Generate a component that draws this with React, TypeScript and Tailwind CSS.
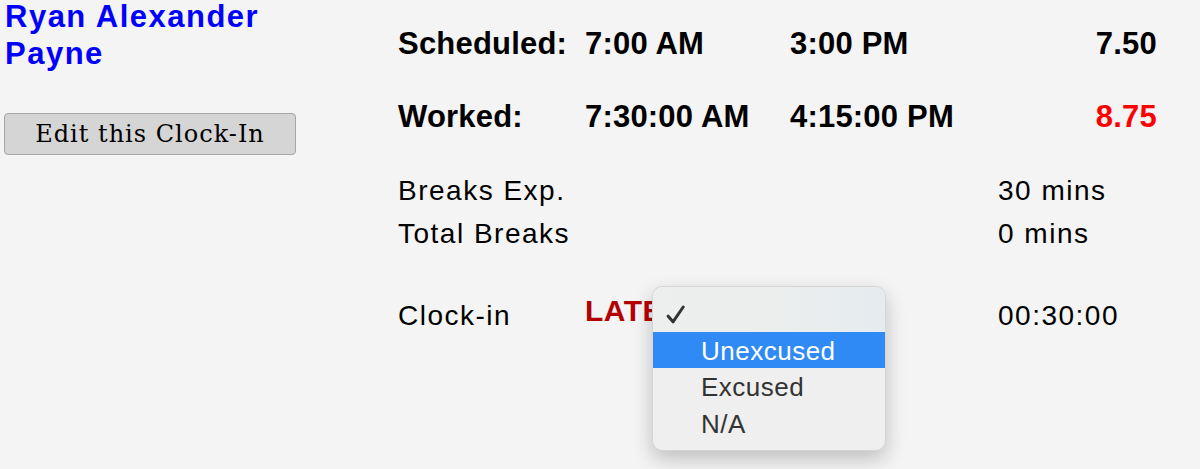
import React from "react";

const Check = () => (
  <svg width="19" height="19" viewBox="0 0 19 19" fill="none">
    <path
      d="M2.2 11.2 L7 16.8 L17.2 2"
      stroke="#333333"
      strokeWidth="3"
      strokeLinecap="round"
      strokeLinejoin="round"
    />
  </svg>
);

export default function App() {
  return (
    <div className="relative min-h-[469px] overflow-hidden bg-[#f4f4f4] font-['Liberation_Sans',Arial,sans-serif] text-black">
      <div className="flex">
        {/* left column */}
        <div className="w-[398px] pl-[5px]">
          <h1 className="-mt-[2px] text-[31px] font-bold leading-[37px] tracking-[1.5px] text-[#0000ff]">
            Ryan Alexander
            <br />
            Payne
          </h1>
          <button className="-ml-px mt-[41px] h-[42px] w-[292px] rounded-[4px] border border-[#a6a6a6] bg-[#d5d5d5] font-['DejaVu_Serif',serif] text-[24px] tracking-[1px] text-black">
            Edit this Clock-In
          </button>
        </div>

        {/* times */}
        <div className="pt-[24px]">
          <div className="grid grid-cols-[187px_205px_208px_159px] text-[31px] font-bold leading-[40px] tracking-[0.2px]">
            <div>Scheduled:</div>
            <div>7:00 AM</div>
            <div>3:00 PM</div>
            <div className="text-right">7.50</div>
          </div>
          <div className="mt-[33px] grid grid-cols-[187px_205px_208px_159px] text-[31px] font-bold leading-[40px] tracking-[0.2px]">
            <div>Worked:</div>
            <div>7:30:00 AM</div>
            <div>4:15:00 PM</div>
            <div className="text-right text-[#ff0000]">8.75</div>
          </div>

          <div className="mt-[32px] text-[28px] leading-[43px] tracking-[1.5px]">
            <div className="grid grid-cols-[187px_205px_208px_159px]">
              <div>Breaks Exp.</div>
              <div />
              <div />
              <div>30 mins</div>
            </div>
            <div className="grid grid-cols-[187px_205px_208px_159px]">
              <div>Total Breaks</div>
              <div />
              <div />
              <div>0 mins</div>
            </div>
            <div className="mt-[39px] grid grid-cols-[187px_205px_208px_159px] items-start">
              <div>Clock-in</div>
              <div className="text-[30px] font-bold leading-[33px] tracking-[0.5px] text-[#b40000]">
                LATE
              </div>
              <div />
              <div>00:30:00</div>
            </div>
          </div>
        </div>
      </div>

      {/* open select menu */}
      <div className="absolute left-[652px] top-[286px] h-[165px] w-[234px] overflow-hidden rounded-[10px] border border-black/10 bg-[#efefef] text-[26px] leading-[36px] tracking-[0.5px] text-[#333] shadow-[0_8px_20px_rgba(0,0,0,0.22)]">
        <div className="h-[45px] bg-linear-to-r from-[#edefef] via-[#eceeee] to-[#e5ebee] pl-[13px] pt-[18px]">
          <Check />
        </div>
        <div className="h-[36px] bg-[#2f8af6] pl-[48px] pt-[1px] text-white">Unexcused</div>
        <div className="h-[37px] pl-[48px] pt-[1px]">Excused</div>
        <div className="h-[36px] pl-[48px] pt-[1px]">N/A</div>
      </div>
    </div>
  );
}
